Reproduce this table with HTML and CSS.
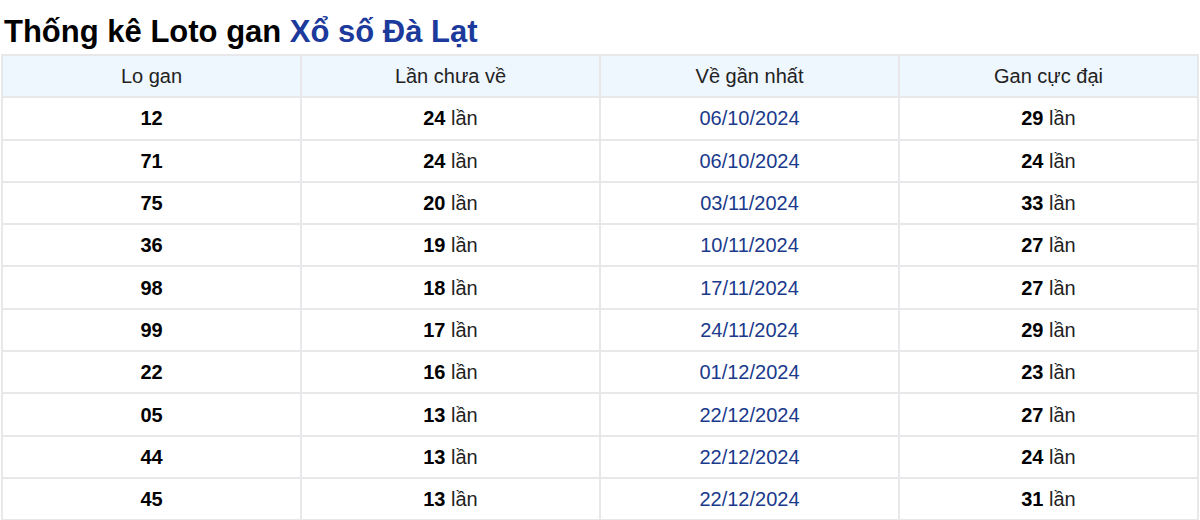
FILE: index.html
```html
<!DOCTYPE html>
<html lang="vi">
<head>
<meta charset="utf-8">
<title>Thống kê Loto gan Xổ số Đà Lạt</title>
<link rel="stylesheet" href="styles.css">
</head>
<body>
<div class="wrap">
  <h2 class="title">Thống kê Loto gan <span class="hl">Xổ số Đà Lạt</span></h2>
  <table class="gan">
    <thead>
      <tr><th>Lo gan</th><th>Lần chưa về</th><th>Về gần nhất</th><th>Gan cực đại</th></tr>
    </thead>
    <tbody>
      <tr><td><b>12</b></td><td><b>24</b> lần</td><td class="date">06/10/2024</td><td><b>29</b> lần</td></tr>
      <tr><td><b>71</b></td><td><b>24</b> lần</td><td class="date">06/10/2024</td><td><b>24</b> lần</td></tr>
      <tr><td><b>75</b></td><td><b>20</b> lần</td><td class="date">03/11/2024</td><td><b>33</b> lần</td></tr>
      <tr><td><b>36</b></td><td><b>19</b> lần</td><td class="date">10/11/2024</td><td><b>27</b> lần</td></tr>
      <tr><td><b>98</b></td><td><b>18</b> lần</td><td class="date">17/11/2024</td><td><b>27</b> lần</td></tr>
      <tr><td><b>99</b></td><td><b>17</b> lần</td><td class="date">24/11/2024</td><td><b>29</b> lần</td></tr>
      <tr><td><b>22</b></td><td><b>16</b> lần</td><td class="date">01/12/2024</td><td><b>23</b> lần</td></tr>
      <tr><td><b>05</b></td><td><b>13</b> lần</td><td class="date">22/12/2024</td><td><b>27</b> lần</td></tr>
      <tr><td><b>44</b></td><td><b>13</b> lần</td><td class="date">22/12/2024</td><td><b>24</b> lần</td></tr>
      <tr><td><b>45</b></td><td><b>13</b> lần</td><td class="date">22/12/2024</td><td><b>31</b> lần</td></tr>
    </tbody>
  </table>
</div>
</body>
</html>
```
FILE: styles.css
```css
html, body {
  margin: 0;
  padding: 0;
  background: #fff;
}
body {
  font-family: "Liberation Sans", Arial, sans-serif;
  color: #111;
}
.wrap {
  padding: 0 1px 0 1px;
}
.title {
  margin: 0 0 4px 0;
  padding: 14px 0 0 3px;
  font-size: 31px;
  line-height: 36px;
  font-weight: bold;
  color: #000;
}
.title .hl {
  color: #1b3a9c;
}
.gan {
  width: 100%;
  border-collapse: collapse;
  table-layout: fixed;
  font-size: 20px;
}
.gan th, .gan td {
  border: 2px solid #e8e8ea;
  text-align: center;
  height: 40.3px;
  padding: 0;
  line-height: 24px;
}
.gan th {
  background: #eef6fe;
  font-weight: normal;
  color: #222;
}
.gan td {
  color: #222;
}
.gan td b {
  color: #000;
}
.gan td.date {
  color: #1a3a8c;
}
```
